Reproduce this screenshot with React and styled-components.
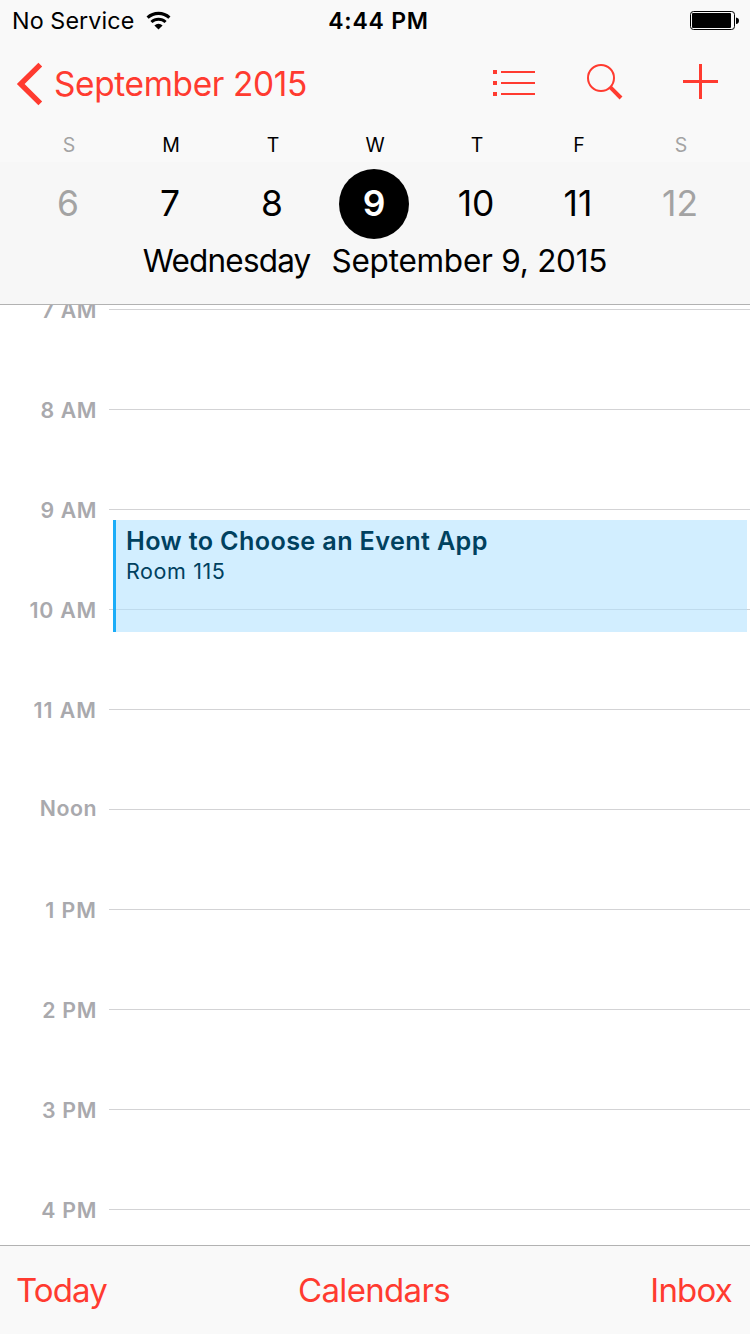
import React from "react";
import styled, { createGlobalStyle } from "styled-components";

const RED = "#ff3b30";

const GlobalStyle = createGlobalStyle`
  * { box-sizing: border-box; }
  body { margin: 0; background: #fff; }
`;

const Screen = styled.div`
  display: flex;
  flex-direction: column;
  width: 750px;
  height: 1334px;
  overflow: hidden;
  background: #fff;
  color: #000;
  font-family: Inter, "Liberation Sans", sans-serif;
`;

const Header = styled.header`
  flex: none;
  height: 305px;
  background: #f7f7f7;
  border-bottom: 1px solid #b2b2b2;
`;

const HeaderTop = styled.div`
  background: #f9f9f9;
`;

const StatusBar = styled.div`
  display: grid;
  grid-template-columns: 1fr auto 1fr;
  align-items: center;
  height: 41px;
  padding: 0 11px 0 12px;
`;

const Carrier = styled.div`
  display: flex;
  align-items: center;
  gap: 12px;
  font-size: 23.3px;
  letter-spacing: 0.1px;
  white-space: nowrap;
`;

const Clock = styled.div`
  font-size: 23px;
  font-weight: 600;
  letter-spacing: 0.8px;
  padding-left: 6px;
`;

const BatteryIcon = styled.svg`
  justify-self: end;
`;

const NavBar = styled.nav`
  display: flex;
  align-items: center;
  justify-content: space-between;
  height: 87px;
  padding: 0 31px 2px 16px;
  color: ${RED};
`;

const BackButton = styled.button`
  display: flex;
  align-items: center;
  gap: 11px;
  padding: 0;
  border: 0;
  background: none;
  color: inherit;
  font: inherit;
  font-size: 33.4px;
  letter-spacing: -0.35px;
  white-space: nowrap;
`;

const NavActions = styled.div`
  display: flex;
  align-items: center;
`;

const IconButton = styled.button`
  display: flex;
  padding: 0;
  border: 0;
  background: none;
  color: inherit;
  margin-left: ${(p) => p.$gap || 0}px;
`;

const Week = styled.div`
  display: grid;
  grid-template-columns: repeat(7, 102px);
  padding-left: 18px;
  height: ${(p) => p.$height}px;
  align-items: center;
  justify-items: center;
`;

const Weekday = styled.span`
  font-size: 19.5px;
  color: ${(p) => (p.$dim ? "#a3a3a3" : "#000")};
`;

const DayNumber = styled.span`
  display: flex;
  align-items: center;
  justify-content: center;
  width: 70px;
  height: 70px;
  margin-right: 2px;
  padding-bottom: 2px;
  border-radius: 50%;
  font-size: 35.4px;
  letter-spacing: 0;
  font-weight: ${(p) => (p.$selected ? 600 : 400)};
  background: ${(p) => (p.$selected ? "#000" : "transparent")};
  color: ${(p) => (p.$selected ? "#fff" : p.$dim ? "#a3a3a3" : "#000")};
`;

const DateLine = styled.div`
  display: flex;
  justify-content: center;
  gap: 21px;
  line-height: 30px;
  font-size: 31.5px;
  white-space: nowrap;
`;

const DatePart = styled.span`
  letter-spacing: ${(p) => p.$spacing}px;
`;

const Timeline = styled.main`
  position: relative;
  flex: 1;
  min-height: 0;
  overflow: hidden;
`;

const Hours = styled.div`
  margin-top: -46px;
`;

const HourRow = styled.div`
  display: flex;
  align-items: flex-start;
  height: 100px;
`;

const HourLabel = styled.span`
  width: 97px;
  line-height: ${(p) => (p.$raised ? 98 : 102)}px;
  text-align: right;
  font-size: 21.3px;
  font-weight: 600;
  letter-spacing: ${(p) => p.$spacing}px;
  color: #a9a9ad;
`;

const HourLine = styled.span`
  flex: 1;
  height: 1px;
  margin: 50px 0 0 12px;
  background: #d3d3d5;
`;

const Event = styled.article`
  position: absolute;
  top: 215px;
  left: 113px;
  right: 3px;
  height: 112px;
  padding: 5px 0 0 10px;
  border-left: 3px solid #1badf8;
  background: rgba(176, 225, 255, 0.57);
  background-clip: padding-box;
  color: #00415f;
`;

const EventTitle = styled.h2`
  margin: 0;
  font-size: 25.2px;
  line-height: 32px;
  font-weight: 600;
  letter-spacing: 0.36px;
`;

const EventPlace = styled.p`
  margin: 0;
  font-size: 21.5px;
  line-height: 29px;
  letter-spacing: 0.6px;
`;

const Toolbar = styled.footer`
  display: grid;
  grid-template-columns: 1fr auto 1fr;
  align-items: center;
  flex: none;
  height: 89px;
  padding: 0 18px 0 16px;
  border-top: 1px solid #b2b2b2;
  background: #f9f9f9;
`;

const ToolbarButton = styled.button`
  justify-self: ${(p) => p.$align};
  padding: 0;
  border: 0;
  background: none;
  color: ${RED};
  font: inherit;
  font-size: 33px;
  letter-spacing: ${(p) => p.$spacing}px;
`;

const DAYS = [
  ["S", 6], ["M", 7], ["T", 8], ["W", 9], ["T", 10], ["F", 11], ["S", 12],
];

const HOURS = [
  ["7 AM", 0.6],
  ["8 AM", 0.6],
  ["9 AM", 0.6],
  ["10 AM", 0.8],
  ["11 AM", 1],
  ["Noon", 0.5],
  ["1 PM", 1],
  ["2 PM", 0.7],
  ["3 PM", 0.7],
  ["4 PM", 0.7],
];

const isWeekend = (i) => i === 0 || i === 6;

export default function App() {
  return (
    <Screen>
      <GlobalStyle />
      <Header>
        <HeaderTop>
          <StatusBar>
            <Carrier>
              <span>No Service</span>
              <svg width="26" height="20" viewBox="0 0 26 20">
                <path d="M1.6 6.6 A16.2 16.2 0 0 1 23.4 6.6" fill="none" stroke="#000" strokeWidth="3.2" />
                <path d="M5.4 11 A10.4 10.4 0 0 1 19.6 11" fill="none" stroke="#000" strokeWidth="3" />
                <path d="M8.4 14.4 A6.2 6.2 0 0 1 16.6 14.4 L12.5 18.6 Z" fill="#000" />
              </svg>
            </Carrier>
            <Clock>4:44 PM</Clock>
            <BatteryIcon width="50" height="20" viewBox="0 0 50 20">
              <rect x="1.5" y="0.5" width="44" height="18" rx="3" fill="none" stroke="#000" />
              <rect x="3" y="2" width="39" height="15" rx="1" fill="#000" />
              <path d="M47 6.5 q3 0.5 3 3.2 q0 2.8 -3 3.3 Z" fill="#000" />
            </BatteryIcon>
          </StatusBar>
          <NavBar>
            <BackButton>
              <svg width="27" height="44" viewBox="0 0 27 44">
                <path d="M24.3 2.7 L4.7 22 L24.3 41.3" fill="none" stroke={RED} strokeWidth="5.4" />
              </svg>
              <span>September 2015</span>
            </BackButton>
            <NavActions>
              <IconButton aria-label="List">
                <svg width="42" height="40" viewBox="0 0 42 40" fill={RED}>
                  <path d="M0 6h4v4H0zM0 17h4v4H0zM0 28h4v4H0zM8 7h34v2H8zM8 18h34v2H8zM8 29h34v2H8z" />
                </svg>
              </IconButton>
              <IconButton aria-label="Search" $gap={52}>
                <svg width="36" height="40" viewBox="0 0 36 40" fill="none" stroke={RED}>
                  <circle cx="14" cy="14" r="13" strokeWidth="2" />
                  <path d="M23.2 23.2 L34 34" strokeWidth="4" />
                </svg>
              </IconButton>
              <IconButton aria-label="Add" $gap={60}>
                <svg width="36" height="40" viewBox="0 0 36 40" fill={RED}>
                  <path d="M16 0h3v35h-3zM0 16h35v3H0z" />
                </svg>
              </IconButton>
            </NavActions>
          </NavBar>
          <Week $height={34}>
            {DAYS.map(([name], i) => (
              <Weekday key={i} $dim={isWeekend(i)}>{name}</Weekday>
            ))}
          </Week>
        </HeaderTop>
        <Week $height={84}>
          {DAYS.map(([, number], i) => (
            <DayNumber key={number} $dim={isWeekend(i)} $selected={number === 9}>{number}</DayNumber>
          ))}
        </Week>
        <DateLine>
          <DatePart $spacing={-0.8}>Wednesday</DatePart>
          <DatePart $spacing={-0.25}>September 9, 2015</DatePart>
        </DateLine>
      </Header>
      <Timeline>
        <Hours>
          {HOURS.map(([hour, spacing]) => (
            <HourRow key={hour}>
              <HourLabel $raised={hour === "Noon"} $spacing={spacing}>{hour}</HourLabel>
              <HourLine />
            </HourRow>
          ))}
        </Hours>
        <Event>
          <EventTitle>How to Choose an Event App</EventTitle>
          <EventPlace>Room 115</EventPlace>
        </Event>
      </Timeline>
      <Toolbar>
        <ToolbarButton $align="start" $spacing={-0.9}>Today</ToolbarButton>
        <ToolbarButton $align="center" $spacing={-0.65}>Calendars</ToolbarButton>
        <ToolbarButton $align="end" $spacing={-0.8}>Inbox</ToolbarButton>
      </Toolbar>
    </Screen>
  );
}
